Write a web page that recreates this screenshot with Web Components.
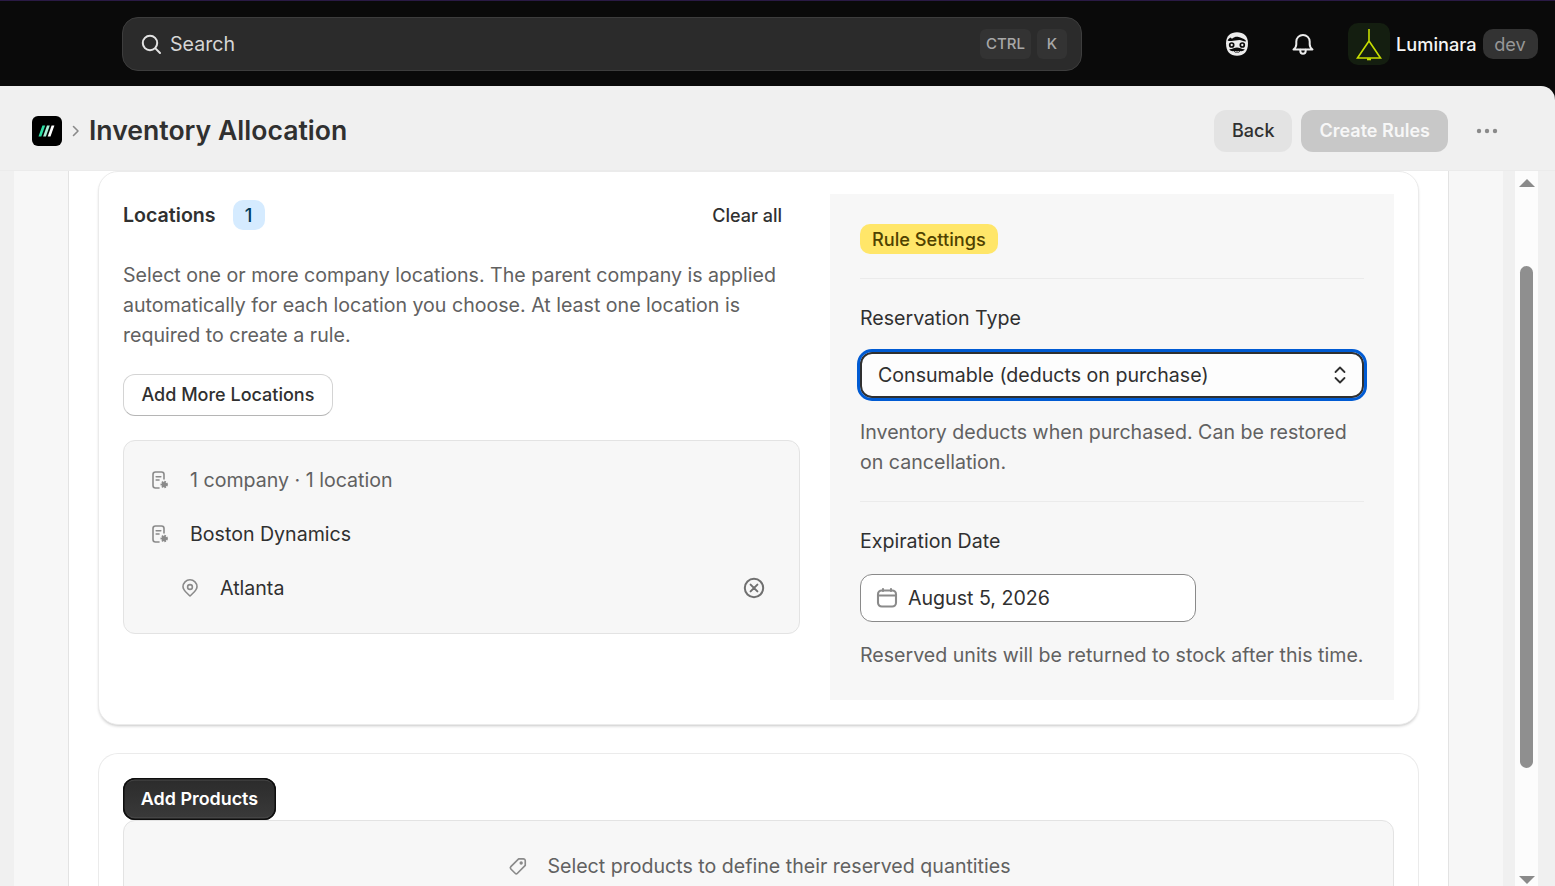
<!doctype html>
<html lang="en">
<head>
<meta charset="utf-8">
<title>Inventory Allocation</title>
<style>
  html, body { margin: 0; height: 100%; overflow: hidden; }
  body { font-family: Inter, "Liberation Sans", sans-serif; background: #0a0a0a; color: #303030; }
</style>
</head>
<body>
<app-shell>
  <top-bar slot="top"></top-bar>
  <page-header slot="header" title="Inventory Allocation"></page-header>
  <scroll-page slot="page">
    <app-card>
      <div style="display:grid;grid-template-columns:677px 564px;column-gap:30px">
        <locations-panel></locations-panel>
        <rule-settings></rule-settings>
      </div>
    </app-card>
    <products-card></products-card>
  </scroll-page>
</app-shell>

<script>
class AppShell extends HTMLElement {
  connectedCallback() {
    this.attachShadow({ mode: 'open' });
    this.shadowRoot.innerHTML = `
      <style>
        :host { display: flex; flex-direction: column; height: 886px; width: 1555px; }
        .main { flex: 1; min-height: 0; display: flex; flex-direction: column; background: #f0f0f0; border-radius: 0 14px 0 0; overflow: hidden; }
      </style>
      <slot name="top"></slot>
      <div class="main">
        <slot name="header"></slot>
        <slot name="page"></slot>
      </div>
    `;
  }
}

class TopBar extends HTMLElement {
  connectedCallback() {
    this.attachShadow({ mode: 'open' });
    this.shadowRoot.innerHTML = `
      <style>
        :host { display: flex; align-items: center; height: 85px; border-top: 1px solid #2a1a45; background: #0a0a0a; box-sizing: content-box; padding-left: 122px; }
        .search { flex: none; width: 960px; height: 54px; box-sizing: border-box; display: flex; align-items: center; background: #2b2b2b; border: 1px solid #3d3d3d; border-radius: 16px; padding: 0 14px 0 17px; color: #d6d6d6; font-size: 19.6px; }
        .search svg { width: 22px; height: 22px; margin-right: 8px; }
        .search span.q { flex: 1; }
        .kbd { height: 30px; width: 51px; display: flex; align-items: center; justify-content: center; background: #333333; border-radius: 6px; color: #a8a8a8; font-size: 15px; font-weight: 500; margin-left: 6px; }
        .kbd.k { width: 30px; }
        .ico { flex: none; width: 26px; height: 26px; display: block; }
        .face { margin-left: 142px; }
        .bell { margin-left: 40px; }
        .avatar { flex: none; width: 42px; height: 42px; margin-left: 32px; border-radius: 10px; background: #141e10; display: flex; }
        .name { margin-left: 6px; color: #f5f5f5; font-size: 18.2px; font-weight: 500; }
        .env { flex: none; width: 55px; margin-left: 6px; height: 30px; display: flex; align-items: center; justify-content: center; background: #333333; border-radius: 10px; color: #979797; font-size: 18.2px; }
      </style>
      <div class="search">
        <svg viewBox="0 0 22 22" fill="none" stroke="#e3e3e3" stroke-width="2" stroke-linecap="round"><circle cx="10" cy="10" r="7.2"/><path d="M15.4 15.4 20 20"/></svg>
        <span class="q">Search</span>
        <span class="kbd">CTRL</span><span class="kbd k">K</span>
      </div>
      <svg class="ico face" viewBox="0 0 26 26">
        <path fill="#ececec" d="M13 1.200c6.500 0 11 3.600 11 11.300 0 8-4.200 12.300-11 12.300S2 20.500 2 12.500C2 4.800 6.500 1.200 13 1.200z"/>
        <path fill="#0a0a0a" d="M3.600 9.400c.7-1.400 1.800-2.500 3-3 .2.900.9 1.300 1.800 1.100 1.800-1.500 4-2 6.200-1.400 2.200.6 4.700 1.600 7 3.200l.4 1.200c-3-.4-4.700-1.100-6.500-1.500-2.900.4-5.500.5-8.100 1-1.500.1-2.700.1-3.800-.6z"/>
        <circle cx="7.700" cy="14" r="2" fill="none" stroke="#0a0a0a" stroke-width="1.700"/>
        <circle cx="18.300" cy="14" r="2" fill="none" stroke="#0a0a0a" stroke-width="1.700"/>
        <path fill="#0a0a0a" d="M5.200 18.300c2.800.3 5.300-1.700 7.800-1.700s5 2 7.800 1.700c-1.500 2-3.300 2.200-4.700 1.700-.8 1.500-1.900 2.100-3.100 2.100s-2.300-.6-3.100-2.100c-1.400.5-3.200.3-4.700-1.700z"/>
        <path fill="#ececec" d="M10.700 20c1.500.5 3.100.5 4.600 0-.5 1-1.300 1.500-2.300 1.500s-1.800-.5-2.300-1.500z"/>
      </svg>
      <svg class="ico bell" viewBox="0 0 26 26" fill="none" stroke="#ececec" stroke-width="2" stroke-linejoin="round" stroke-linecap="round">
        <path d="M3.500 18.500c1.800-1.300 2.800-2.700 2.800-5.200V10.600a6.700 6.700 0 0 1 13.400 0v2.700c0 2.500 1 3.900 2.800 5.200z"/>
        <path d="M10.300 18.800v1.200a2.700 2.700 0 0 0 5.400 0v-1.200"/>
      </svg>
      <div class="avatar">
        <svg viewBox="0 0 42 42" width="42" height="42" fill="none" stroke="#c6de00" stroke-width="1.600">
          <path d="M21 6V18M21 18 9.500 35H32.500z"/><path d="M19 36.300h4" stroke-width="2"/>
        </svg>
      </div>
      <span class="name">Luminara</span>
      <span class="env">dev</span>
    `;
  }
}

class PageHeader extends HTMLElement {
  connectedCallback() {
    const title = this.getAttribute('title');
    this.attachShadow({ mode: 'open' });
    this.shadowRoot.innerHTML = `
      <style>
        :host { display: flex; align-items: center; box-sizing: border-box; height: 85px; flex: none; padding: 5px 57px 0 32px; border-bottom: 1px solid #ebebeb; }
        .logo { width: 30px; height: 30px; background: #000; border-radius: 6px; display: block; }
        .chev { width: 8px; height: 12px; margin: 0 9px 0 10px; }
        h1 { margin: 0 0 2px; flex: 1; font-size: 26.6px; line-height: 36px; font-weight: 600; color: #303030; }
        button { font: inherit; border: 0; height: 42px; border-radius: 12px; font-size: 18px; padding: 0 18px; font-weight: 500; }
        .back { background: #e3e3e3; color: #303030; }
        .create { background: #c8c8c8; color: #f7f7f7; font-weight: 600; margin-left: 9px; }
        .dots { width: 22px; height: 6px; margin-left: 28px; }
      </style>
      <svg class="logo" viewBox="0 0 30 30">
        <path fill="#2fe0a5" d="M10.400 9.500h2.800l-3.900 11H6.500z"/>
        <path fill="#a8f0d6" d="M15 9.500h2.800l-3.900 11h-2.800z"/>
        <path fill="#fff" d="M19.600 9.500h2.800l-3.900 11h-2.800z"/>
      </svg>
      <svg class="chev" viewBox="0 0 8 12" fill="none" stroke="#8a8a8a" stroke-width="1.600" stroke-linecap="round" stroke-linejoin="round"><path d="M1.500 1.500 6 6l-4.500 4.500"/></svg>
      <h1>${title}</h1>
      <button class="back">Back</button>
      <button class="create">Create Rules</button>
      <svg class="dots" viewBox="0 0 22 6" fill="#8a8a8a"><circle cx="3" cy="3" r="2.200"/><circle cx="11" cy="3" r="2.200"/><circle cx="19" cy="3" r="2.200"/></svg>
    `;
  }
}

class ScrollPage extends HTMLElement {
  connectedCallback() {
    this.attachShadow({ mode: 'open' });
    this.shadowRoot.innerHTML = `
      <style>
        :host { display: flex; flex: 1; min-height: 0; }
        .gutter-l { width: 14px; flex: none; }
        .side { width: 54px; flex: none; background: #f7f7f7; }
        .content { width: 1381px; flex: none; box-sizing: border-box; background: #fff; border: solid #e3e3e3; border-width: 0 1px; padding-left: 29px; overflow: hidden; display: flex; flex-direction: column; gap: 28px; }
        .gutter-r { width: 12px; flex: none; }
        .bar { width: 23px; flex: none; background: #fcfcfc; display: flex; flex-direction: column; align-items: center; }
        .up, .down { width: 0; height: 0; border-left: 8px solid transparent; border-right: 8px solid transparent; }
        .up { border-bottom: 8px solid #8a8a8a; margin-top: 8px; }
        .down { border-top: 8px solid #8a8a8a; margin-top: 108px; }
        .thumb { width: 13px; height: 502px; border-radius: 7px; background: #8f8f8f; margin-top: 79px; }
      </style>
      <div class="gutter-l"></div>
      <div class="side"></div>
      <div class="content"><slot></slot></div>
      <div class="side"></div>
      <div class="gutter-r"></div>
      <div class="bar"><div class="up"></div><div class="thumb"></div><div class="down"></div></div>
    `;
  }
}

class AppCard extends HTMLElement {
  connectedCallback() {
    this.attachShadow({ mode: 'open' });
    this.shadowRoot.innerHTML = `
      <style>
        :host { display: block; flex: none; background: #fff; border: 1px solid #ebebeb; border-radius: 20px; padding: 22px 24px 24px; width: 1271px; box-shadow: 0 2px 3px -1px rgba(26,26,26,.25); }
      </style>
      <slot></slot>
    `;
  }
}

const companyIcon = `
  <svg viewBox="0 0 22 22" width="22" height="22" fill="none" stroke="#8a8a8a" stroke-width="1.600" stroke-linecap="round">
    <path d="M10 19H6.500A2.500 2.500 0 0 1 4 16.500V5.500A2.500 2.500 0 0 1 6.500 3h6A2.500 2.500 0 0 1 15 5.500V10"/>
    <path d="M7.200 7.800h4.600M7.200 11h2.800"/>
    <circle cx="15.200" cy="15.500" r="2.600" fill="#8a8a8a" stroke-width="2.200" stroke-dasharray="1.500 .9" stroke-linecap="butt"/>
  </svg>`;

class LocationsPanel extends HTMLElement {
  connectedCallback() {
    this.attachShadow({ mode: 'open' });
    this.shadowRoot.innerHTML = `
      <style>
        :host { display: block; padding-top: 6px; }
        .head { display: flex; align-items: center; height: 30px; padding-right: 18px; }
        h2 { margin: 0; font-size: 19.6px; font-weight: 600; color: #303030; }
        .count { margin-left: 17px; width: 32px; height: 30px; display: flex; align-items: center; justify-content: center; border-radius: 10px; background: #d5ebff; color: #003a5a; font-size: 18.2px; font-weight: 500; }
        .clear { margin-left: auto; font-size: 18px; font-weight: 500; color: #303030; }
        p { margin: 30px 0 24px; font-size: 19.6px; line-height: 30px; color: #616161; }
        .more { font: inherit; display: block; height: 42px; padding: 0 17.500px 2px; background: #fff; border: 1px solid #d4d4d4; border-bottom-color: #b5b5b5; border-radius: 12px; font-size: 18px; font-weight: 500; color: #303030; }
        .box { margin-top: 24px; height: 194px; box-sizing: border-box; background: #f7f7f7; border: 1px solid #e3e3e3; border-radius: 12px; padding: 12px 0 0 25px; }
        .row { display: flex; align-items: center; height: 54px; font-size: 19.6px; color: #303030; }
        .row svg { flex: none; }
        .row .txt { margin-left: 19px; }
        .row.sum { color: #616161; }
        .row.loc { padding-left: 30px; }
        .x { margin-left: auto; margin-right: 34px; }
      </style>
      <div class="head"><h2>Locations</h2><span class="count">1</span><span class="clear">Clear all</span></div>
      <p>Select one or more company locations. The parent company is applied automatically for each location you choose. At least one location is required to create a rule.</p>
      <button class="more">Add More Locations</button>
      <div class="box">
        <div class="row sum">${companyIcon}<span class="txt">1 company · 1 location</span></div>
        <div class="row">${companyIcon}<span class="txt">Boston Dynamics</span></div>
        <div class="row loc">
          <svg viewBox="0 0 22 22" width="22" height="22" fill="none" stroke="#8a8a8a" stroke-width="1.600" stroke-linejoin="round"><path d="M11 19C8 16 4 13.500 4 9.800a7 7 0 0 1 14 0C18 13.500 14 16 11 19z"/><circle cx="11" cy="10" r="2.400"/></svg>
          <span class="txt">Atlanta</span>
          <svg class="x" viewBox="0 0 22 22" width="22" height="22" fill="none" stroke="#707070" stroke-width="2" stroke-linecap="round"><circle cx="11" cy="11" r="9.200"/><path d="m7.600 7.600 6.800 6.800M14.400 7.600l-6.800 6.800"/></svg>
        </div>
      </div>
    `;
  }
}

class RuleSettings extends HTMLElement {
  connectedCallback() {
    this.attachShadow({ mode: 'open' });
    this.shadowRoot.innerHTML = `
      <style>
        :host { display: block; background: #f7f7f7; padding: 30px; height: 506px; box-sizing: border-box; }
        .pill { display: inline-flex; align-items: center; height: 30px; padding: 0 12px; border-radius: 10px; background: #ffe669; color: #4f4200; font-size: 18.2px; font-weight: 500; vertical-align: top; }
        .top { height: 30px; }
        hr { border: 0; border-top: 1px solid #ebebeb; margin: 24px 0; }
        .label { font-size: 19.6px; line-height: 30px; color: #303030; }
        .select { margin: 19px 0 19px; height: 46px; box-sizing: border-box; display: flex; align-items: center; justify-content: space-between; background: #fdfdfd; border: 2px solid #303030; border-radius: 12px; padding: 0 15px 0 16px; outline: 3px solid #005bd3; outline-offset: 0; font-size: 19.6px; color: #303030; }
        .hint { font-size: 19.6px; line-height: 30px; color: #616161; }
        .date { margin: 18px 0; width: 336px; height: 48px; box-sizing: border-box; display: flex; align-items: center; background: #fff; border: 1px solid #8a8a8a; border-radius: 12px; padding-left: 15px; font-size: 19.6px; color: #303030; }
        .date svg { margin-right: 10px; }
      </style>
      <div class="top"><span class="pill">Rule Settings</span></div>
      <hr>
      <div class="label">Reservation Type</div>
      <div class="select">
        <span>Consumable (deducts on purchase)</span>
        <svg viewBox="0 0 14 22" width="14" height="22" fill="none" stroke="#303030" stroke-width="1.800" stroke-linecap="round" stroke-linejoin="round"><path d="M2.500 8 7 3.500 11.500 8M2.500 14 7 18.500 11.500 14"/></svg>
      </div>
      <div class="hint">Inventory deducts when purchased. Can be restored on cancellation.</div>
      <hr>
      <div class="label">Expiration Date</div>
      <div class="date">
        <svg viewBox="0 0 22 22" width="22" height="22" fill="none" stroke="#8a8a8a" stroke-width="2.100" stroke-linecap="round"><rect x="2" y="3.500" width="18" height="16" rx="3.800"/><path d="M2.500 8.500h17M7 2v2M15 2v2"/></svg>
        <span>August 5, 2026</span>
      </div>
      <div class="hint">Reserved units will be returned to stock after this time.</div>
    `;
  }
}

class ProductsCard extends HTMLElement {
  connectedCallback() {
    this.attachShadow({ mode: 'open' });
    this.shadowRoot.innerHTML = `
      <style>
        :host { display: block; flex: none; width: 1271px; background: #fff; border: 1px solid #ebebeb; border-bottom: 0; border-radius: 20px 20px 0 0; padding: 24px 24px 0; }
        button { font: inherit; display: block; width: 153px; height: 42px; padding: 0 0 2px; border: 0; border-radius: 12px; background: linear-gradient(#2b2b2b, #3a3a3a); box-shadow: inset 0 0 0 1.500px #0e0e0e, inset 0 2.500px 0 #4a4a4a, inset 0 -3px 0 #454545; color: #fff; font-size: 17.900px; font-weight: 600; position: relative; z-index: 1; }
        .empty { height: 120px; box-sizing: border-box; background: #f7f7f7; border: 1px solid #e3e3e3; border-radius: 12px; padding-top: 30px; display: flex; justify-content: center; align-items: flex-start; font-size: 19.6px; line-height: 30px; color: #616161; }
        .empty svg { margin: 4px 19px 0 0; }
      </style>
      <button>Add Products</button>
      <div class="empty">
        <svg viewBox="-2 -1 20 20" width="22" height="22" fill="none" stroke="#8a8a8a" stroke-width="1.500" stroke-linejoin="round"><path d="M9.500 2.500h4.200a1.800 1.800 0 0 1 1.800 1.800v4.200L8.400 15.600a1.500 1.500 0 0 1-2.100 0l-3.900-3.900a1.500 1.500 0 0 1 0-2.100z"/><circle cx="11.800" cy="6.200" r=".8" fill="#8a8a8a"/></svg>
        <span>Select products to define their reserved quantities</span>
      </div>
    `;
  }
}

customElements.define('app-shell', AppShell);
customElements.define('top-bar', TopBar);
customElements.define('page-header', PageHeader);
customElements.define('scroll-page', ScrollPage);
customElements.define('app-card', AppCard);
customElements.define('locations-panel', LocationsPanel);
customElements.define('rule-settings', RuleSettings);
customElements.define('products-card', ProductsCard);
</script>
</body>
</html>
